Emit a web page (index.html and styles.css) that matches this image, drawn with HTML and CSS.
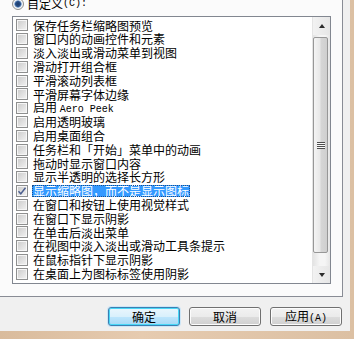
FILE: index.html
```html
<!DOCTYPE html>
<html lang="zh-CN">
  <head>
    <meta charset="UTF-8">
    <title>性能选项</title>
    <link rel="stylesheet" href="styles.css">
  </head>
  <body>
    <div class="dialog">
      <div class="page">
        <label class="choice"><span class="radio"></span>自定义<span class="latin">(C):</span></label>
        <div class="listbox">
          <ul class="items">
            <li><span class="box"></span><span class="text">保存任务栏缩略图预览</span></li>
            <li><span class="box"></span><span class="text">窗口内的动画控件和元素</span></li>
            <li><span class="box"></span><span class="text">淡入淡出或滑动菜单到视图</span></li>
            <li><span class="box"></span><span class="text">滑动打开组合框</span></li>
            <li><span class="box"></span><span class="text">平滑滚动列表框</span></li>
            <li><span class="box"></span><span class="text">平滑屏幕字体边缘</span></li>
            <li><span class="box"></span><span class="text">启用 <span class="latin">Aero Peek</span></span></li>
            <li><span class="box"></span><span class="text">启用透明玻璃</span></li>
            <li><span class="box"></span><span class="text">启用桌面组合</span></li>
            <li><span class="box"></span><span class="text">任务栏和「开始」菜单中的动画</span></li>
            <li><span class="box"></span><span class="text">拖动时显示窗口内容</span></li>
            <li><span class="box"></span><span class="text">显示半透明的选择长方形</span></li>
            <li class="selected">
              <span class="box">
                <svg width="10" height="10" viewBox="0 0 10 10"><path d="M1.5 5.2 L3.8 7.8 L8.5 1.8" fill="none" stroke="#4c5f8f" stroke-width="1.4"/></svg>
              </span>
              <span class="text">显示缩略图，而不是显示图标</span>
            </li>
            <li><span class="box"></span><span class="text">在窗口和按钮上使用视觉样式</span></li>
            <li><span class="box"></span><span class="text">在窗口下显示阴影</span></li>
            <li><span class="box"></span><span class="text">在单击后淡出菜单</span></li>
            <li><span class="box"></span><span class="text">在视图中淡入淡出或滑动工具条提示</span></li>
            <li><span class="box"></span><span class="text">在鼠标指针下显示阴影</span></li>
            <li><span class="box"></span><span class="text">在桌面上为图标标签使用阴影</span></li>
          </ul>
          <div class="scrollbar">
            <div class="arrow up"></div>
            <div class="track">
              <div class="thumb"><span class="grip"></span></div>
            </div>
            <div class="arrow down"></div>
          </div>
        </div>
      </div>
      <div class="buttons">
        <button class="default">确定</button>
        <button>取消</button>
        <button>应用<span class="latin">(A)</span></button>
      </div>
    </div>
  </body>
</html>
```

FILE: styles.css
```css
html,
body {
  margin: 0;
  padding: 0;
}

body {
  width: 354px;
  height: 339px;
  overflow: hidden;
  font-family: "Noto Sans CJK SC", sans-serif;
  font-size: 12px;
  color: #000;
  background: linear-gradient(to right, #d9bb9c, #e6cbb0 40%, #dcc0a3);
}

.latin {
  font-family: "Liberation Mono", monospace;
  font-size: 10px;
}

.dialog {
  width: 350px;
  height: 331px;
  background: #f0f0f0;
  display: flex;
  flex-direction: column;
}

.page {
  box-sizing: border-box;
  width: 343px;
  height: 297px;
  padding-left: 12px;
  background: #fbfbfb;
  border-right: 1px solid #898c95;
  border-bottom: 1px solid #898c95;
  overflow: hidden;
}

.choice {
  display: flex;
  align-items: center;
  height: 16px;
  margin-top: -4px;
  line-height: 16px;
}

.radio {
  box-sizing: border-box;
  width: 12px;
  height: 12px;
  margin-right: 3px;
  border: 1px solid #8e8f8f;
  border-radius: 50%;
  background: radial-gradient(circle, #1d3a66 0, #28508a 2.5px, #8fb0d8 3.5px, #f4f4f4 4px);
}

.listbox {
  box-sizing: border-box;
  width: 319px;
  height: 268px;
  margin-top: 4px;
  display: flex;
  background: #fff;
  border: 1px solid #828790;
}

.items {
  flex: 1;
  margin: 0;
  padding: 1.6px 0 0 3px;
  list-style: none;
}

.items li {
  display: flex;
  align-items: center;
  height: 13.8px;
  white-space: nowrap;
}

.box {
  box-sizing: border-box;
  display: flex;
  align-items: center;
  justify-content: center;
  width: 12px;
  height: 12px;
  margin-right: 5px;
  border: 1px solid #8e8f8f;
  background: linear-gradient(135deg, #cacaca, #f3f3f3);
  box-shadow: inset 0 0 0 1px #f6f6f6;
}

.text {
  line-height: 13.8px;
}

.selected .text {
  margin-left: -1px;
  padding: 0 1px;
  line-height: 12px;
  color: #fff;
  background: #3399ff;
  outline: 1px dotted #1b4f8c;
  outline-offset: -1px;
}

.scrollbar {
  width: 17px;
  display: flex;
  flex-direction: column;
  background: #f0f0f0;
  border-left: 1px solid #e4e4e4;
}

.arrow {
  height: 18px;
  display: flex;
  align-items: center;
  justify-content: center;
  background: linear-gradient(to right, #f2f2f2, #e6e6e6);
}

.arrow::after {
  content: "";
  border-left: 3.5px solid transparent;
  border-right: 3.5px solid transparent;
}

.up::after {
  border-bottom: 4px solid #2b2b2b;
}

.down {
  height: 17px;
}

.down::after {
  border-top: 4px solid #2b2b2b;
}

.track {
  flex: 1;
  padding-top: 2px;
  background: linear-gradient(to right, #e3e3e3, #f5f5f5 40%, #f5f5f5 70%, #e6e6e6);
}

.thumb {
  box-sizing: border-box;
  height: 216px;
  margin-right: 2px;
  display: flex;
  align-items: center;
  justify-content: center;
  border: 1px solid #979797;
  border-radius: 2px;
  background: linear-gradient(to right, #f4f4f4, #e8e8e8 45%, #d6d6d6 55%, #cfcfcf);
}

.grip {
  width: 8px;
  height: 7px;
  background: repeating-linear-gradient(to bottom, #4f4f4f 0 1px, #fafafa 1px 2px);
}

.buttons {
  display: flex;
  justify-content: flex-end;
  gap: 9px;
  padding: 10px 8px 0 0;
}

button {
  box-sizing: border-box;
  width: 72px;
  height: 19px;
  padding: 0;
  font-family: inherit;
  font-size: 12px;
  line-height: 15px;
  color: #000;
  border: 1px solid #707070;
  border-radius: 3px;
  background: linear-gradient(to bottom, #f2f2f2, #ebebeb 50%, #dddddd 50%, #cfcfcf);
  box-shadow: inset 0 0 0 1px #fcfcfc;
}

button.default {
  border-color: #3c7fb1;
  background: linear-gradient(to bottom, #eaf6fd, #d9f0fc 50%, #bee6fd 50%, #a7d9f5);
  box-shadow: inset 0 0 0 1px #48d7f7, 0 0 0 1px #cde6f7;
}
```
